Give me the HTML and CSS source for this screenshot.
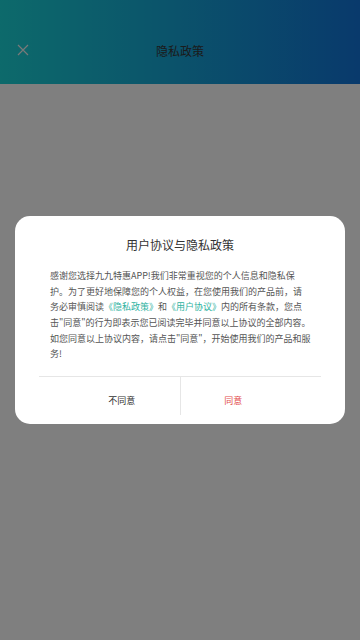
FILE: index.html
```html
<!DOCTYPE html>
<html lang="zh-CN">
<head>
<meta charset="utf-8">
<title>隐私政策</title>
<link rel="stylesheet" href="styles.css">
</head>
<body>
<div class="page">
  <header class="header">
    <div class="bar">
      <span class="close">
        <svg width="12" height="12" viewBox="0 0 12 12"><path d="M1 1L11 11M11 1L1 11" stroke="#f2f2f2" stroke-width="1.2" fill="none"/></svg>
      </span>
      <h1 class="title">隐私政策</h1>
    </div>
  </header>
  <main class="content"></main>
</div>
<div class="overlay">
  <div class="dialog">
    <h2 class="dialog-title">用户协议与隐私政策</h2>
    <p class="dialog-text">感谢您选择九九特惠APP!我们非常重视您的个人信息和隐私保<br>护。为了更好地保障您的个人权益，在您使用我们的产品前，请<br>务必审慎阅读<a class="link">《隐私政策》</a>和<a class="link">《用户协议》</a>内的所有条款，您点<br>击"同意"的行为即表示您已阅读完毕并同意以上协议的全部内容。<br>如您同意以上协议内容，请点击"同意"，开始使用我们的产品和服<br>务!</p>
    <div class="actions">
      <button class="btn btn-cancel"><span>不同意</span></button>
      <span class="vline"></span>
      <button class="btn btn-ok"><span>同意</span></button>
    </div>
  </div>
</div>
</body>
</html>
```
FILE: styles.css
```css
* { box-sizing: border-box; }
html, body { margin: 0; padding: 0; }
body {
  width: 360px;
  height: 640px;
  overflow: hidden;
  font-family: "Noto Sans CJK SC", "Noto Sans", sans-serif;
  background: #fff;
}
.page { width: 360px; height: 640px; display: flex; flex-direction: column; }
.header {
  height: 84px;
  padding-top: 32px;
  background: linear-gradient(90deg, #1ad4d6 0%, #1274d8 100%);
}
.bar {
  position: relative;
  height: 36px;
  display: flex;
  align-items: center;
  justify-content: center;
}
.close {
  position: absolute;
  left: 17px;
  top: 12px;
  width: 12px;
  height: 12px;
  display: flex;
}
.title {
  margin: 0;
  font-size: 12px;
  font-weight: 400;
  color: #363636;
}
.content { flex: 1; background: #fff; }
.overlay {
  position: fixed;
  inset: 0;
  background: rgba(0,0,0,0.5);
  display: flex;
  align-items: center;
  justify-content: center;
}
.dialog {
  width: 330px;
  background: #fff;
  border-radius: 15px;
  padding-top: 20px;
  display: flex;
  flex-direction: column;
}
.dialog-title {
  margin: 0;
  text-align: center;
  font-size: 12px;
  line-height: 18px;
  font-weight: 400;
  color: #333;
}
.dialog-text {
  margin: 14px 0 0;
  padding: 0 35px;
  font-size: 9px;
  line-height: 15.6px;
  color: #555;
  white-space: nowrap;
}
.link { color: #2fb3a1; }
.actions {
  margin: 14px 24px 0;
  border-top: 1px solid #e6e6e6;
  height: 48px;
  display: flex;
  align-items: flex-start;
}
.vline {
  width: 1px;
  height: 38px;
  background: #e6e6e6;
}
.btn {
  flex: 1 1 0;
  height: 47px;
  border: 0;
  background: none;
  font-family: inherit;
  font-size: 9px;
  padding: 0;
  text-align: center;
}
.btn-cancel { color: #333; }
.btn-cancel span { margin-left: 25px; }
.btn-ok { color: #e34d4d; }
.btn-ok span { margin-right: 35px; }
```
